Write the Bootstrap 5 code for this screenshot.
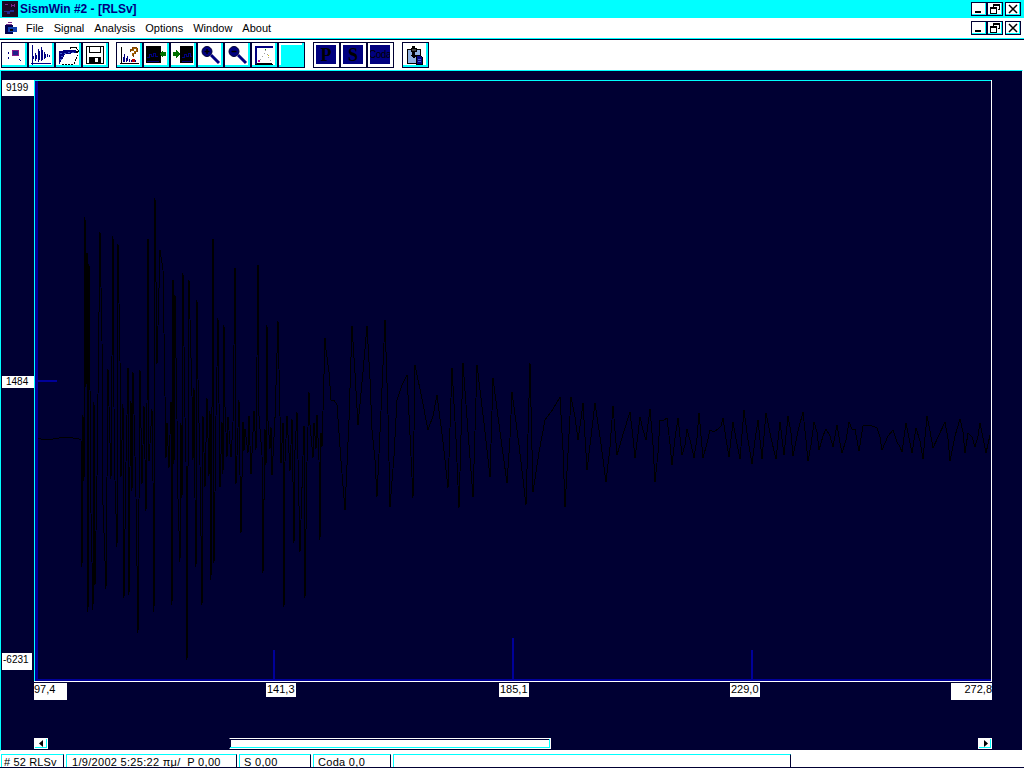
<!DOCTYPE html>
<html lang="en">
<head>
    <meta charset="UTF-8">
    <title>SismWin #2 - [RLSv]</title>
    <link href="https://cdn.jsdelivr.net/npm/bootstrap@5.3.0/dist/css/bootstrap.min.css" rel="stylesheet">
    <style>
        html, body { height: 768px; overflow: hidden; }
        body {
            background: #fff;
            color: #000;
            font-family: "Liberation Sans", Arial, sans-serif;
            font-size: 12px;
            line-height: 1;
        }
        .app-win { width: 1024px; height: 768px; }

        /* title + menu */
        .title-row { height: 18px; background: #0ff; padding: 0 2px; }
        .title-text { margin-left: 2px; color: #000080; font-weight: 700; font-size: 12px; }
        .menu-row { height: 20px; padding: 0 2px 0 5px; }
        .menu-item { margin-right: 10px; font-size: 11px; }
        .menu-icon { margin-right: 9px; }
        .win-btns { margin-left: auto; margin-right: 1px; }
        .win-btn {
            width: 16px; height: 14px; padding: 0;
            background: #fff;
            border: 1px solid #000033;
            box-shadow: inset -1px -1px 0 #0ff;
            border-radius: 0;
            display: flex; align-items: center; justify-content: center;
        }
        .win-gap { margin-left: 2px; }

        /* toolbar */
        .tool-row { height: 32px; padding: 3px 0 0 1px; border-top: 1px solid #0ff; background: #fff; position: relative; }
        .tool-row::before { content: ""; position: absolute; left: 0; right: 0; top: 0; height: 1px; background: #000033; }
        .tool-btn {
            width: 27px; height: 26px; padding: 0; border-radius: 0;
            background: #fff;
            border: 1px solid #000033;
            box-shadow: inset -2px -2px 0 #0ff;
            display: flex; align-items: flex-start; justify-content: flex-start;
            flex: none;
        }
        .tool-btn svg { display: block; margin: 1px 0 0 1px; }
        .tool-sep { width: 8px; flex: none; }
        .tool-sep-first { width: 7px; flex: none; }
        .tool-fill { background: #0ff; box-shadow: inset -2px -2px 0 #0ff, inset 2px 2px 0 #fff; }
        .tool-pick {
            width: 27px; height: 26px; padding: 2px 3px 3px 2px; border-radius: 0; flex: none;
            background: #fff; border: 1px solid #000033;
        }
        .pick-face {
            display: flex; align-items: center; justify-content: center;
            height: 100%; background: #000080; color: #000;
            font-family: "Liberation Serif", serif; font-weight: 700; font-size: 18px;
            overflow: hidden; white-space: nowrap;
        }
        .pick-small { font-family: "Liberation Sans", sans-serif; font-weight: 400; font-size: 10px; letter-spacing: -.5px; }

        /* chart area */
        .chart-area {
            position: relative;
            height: 681px;
            background: #000033;
            border-top: 1px solid #0ff;
            border-left: 1px solid #0ff;
            border-right: 1px solid #fff;
            border-bottom: 1px solid #fff;
            margin-right: 1px;
        }
        .plot-wrap { width: 958px; height: 602px; margin: 9px 0 0 33px; }
        .plot-wrap svg { display: block; }
        .val-tag {
            position: absolute; background: #fff; color: #000;
            font-size: 11px; line-height: 13px; white-space: nowrap;
        }
        .y-tag { left: 1px; width: 32px; font-size: 10px; padding-left: 4px; }
        .scroll-row { height: 11px; margin: 56px 0 0 33px; width: 958px; }
        .scroll-end {
            width: 14px; height: 11px; padding: 0; border-radius: 0; flex: none;
            background: #fff; border: 1px solid #fff; box-shadow: inset -1px -1px 0 #0ff;
            display: flex; align-items: center; justify-content: center;
        }
        .scroll-thumb {
            width: 322px; height: 11px; margin-left: 181px; flex: none;
            background: #fff; border: 1px solid #fff; border-left-color: #000033;
            box-shadow: inset -1px -1px 0 #0ff, inset 1px 1px 0 #000033;
        }

        /* status bar */
        .stat-row { height: 17px; padding: 3px 0 0 1px; border-bottom: 1px solid #000033; gap: 2px; }
        .stat-cell {
            height: 13px; padding: 2px 0 0 3px; flex: none;
            border-top: 1px solid #0ff; border-left: 1px solid #0ff; border-right: 1px solid #000033;
            font-size: 11px; letter-spacing: .3px; white-space: nowrap; overflow: hidden;
        }
        .stat-id { width: 63px; padding-left: 2px; letter-spacing: .15px; }
        .stat-time { width: 171px; padding-left: 5px; }
        .stat-s { width: 72px; padding-left: 4px; }
        .stat-coda { width: 78px; padding-left: 4px; }
        .stat-rest { width: 398px; }
    </style>
</head>
<body>
    <div class="app-win d-flex flex-column">

        <!-- title -->
        <div class="title-row d-flex align-items-center">
            <svg width="16" height="16" viewBox="0 0 16 16" shape-rendering="crispEdges">
                <rect width="16" height="16" fill="#1a0a24"/>
                <path d="M3 3h3v1H3zM9 3h1v3H9zM12 3h1v3h-1zM10 4h2v1h-2z" fill="#7a2a8a"/>
                <path d="M2 10h6v-1h4v2H8v2H5v-2H2z" fill="#202a90"/>
            </svg>
            <span class="title-text">SismWin #2 - [RLSv]</span>
            <div class="win-btns d-flex">
                <button class="win-btn" type="button"><svg width="12" height="10" shape-rendering="crispEdges"><rect x="2" y="7" width="6" height="2" fill="#000"/></svg></button>
                <button class="win-btn" type="button"><svg width="12" height="10" fill="none" stroke="#000" shape-rendering="crispEdges"><path d="M4.500 2.500v-2h6v5h-2M1.500 3.500h6v6h-6zM1.500 4.500h6M4.500 1.500h6"/></svg></button>
                <button class="win-btn win-gap" type="button"><svg width="12" height="10" fill="none" stroke="#000" stroke-width="1.500"><path d="M2 1l8 8M10 1l-8 8"/></svg></button>
            </div>
        </div>

        <!-- menu -->
        <div class="menu-row d-flex align-items-center">
            <svg class="menu-icon" width="12" height="13" viewBox="0 0 12 13" shape-rendering="crispEdges">
                <path d="M1 2h6v1H1zM3 0h4v1H3z" fill="#7a2a8a"/>
                <rect x="0" y="3" width="8" height="9" fill="#000050"/>
                <rect x="3" y="5" width="9" height="5" fill="#1040b0"/>
                <rect x="5" y="7" width="3" height="2" fill="#000"/>
            </svg>
            <span class="menu-item">File</span>
            <span class="menu-item">Signal</span>
            <span class="menu-item">Analysis</span>
            <span class="menu-item">Options</span>
            <span class="menu-item">Window</span>
            <span class="menu-item">About</span>
            <div class="win-btns d-flex">
                <button class="win-btn" type="button"><svg width="12" height="10" shape-rendering="crispEdges"><rect x="2" y="7" width="6" height="2" fill="#000"/></svg></button>
                <button class="win-btn" type="button"><svg width="12" height="10" fill="none" stroke="#000" shape-rendering="crispEdges"><path d="M4.500 2.500v-2h6v5h-2M1.500 3.500h6v6h-6zM1.500 4.500h6M4.500 1.500h6"/></svg></button>
                <button class="win-btn win-gap" type="button"><svg width="12" height="10" fill="none" stroke="#000" stroke-width="1.500"><path d="M2 1l8 8M10 1l-8 8"/></svg></button>
            </div>
        </div>

        <!-- toolbar -->
        <div class="tool-row d-flex">
            <button class="tool-btn" type="button"><svg width="22" height="22" shape-rendering="crispEdges">
                <rect x="9" y="6" width="7" height="6" fill="#8a1a8a"/><rect x="10" y="7" width="5" height="4" fill="#20208a"/>
                <path d="M5 8h1v2H5zM5 13h1v2H5zM16 15h1v1h-1zM17 16h1v1h-1z" fill="#000080"/>
            </svg></button>
            <button class="tool-btn" type="button"><svg width="22" height="22" fill="none" stroke="#000080" shape-rendering="crispEdges">
                <path d="M2.500 1v20M1 19.500h20"/>
                <path d="M3 12v3M5 9v8M6 11v4M8 5v13M9 7v9M11 3v14M12 6v10M14 8v7M15 10v4M17 10v3M19 11v2"/>
            </svg></button>
            <button class="tool-btn" type="button"><svg width="22" height="22" shape-rendering="crispEdges">
                <path d="M2 7h3l2-1h12v3L8 10 2 21z" fill="#000080"/>
                <path d="M3 9h2M7 9h2M11 8h2M15 8h2M4 12h2M3 15h2" stroke="#4060d0"/>
                <path d="M13 5V3h6v1l2 2v1M19 7h3l-2 2z" stroke="#000" fill="none"/>
                <path d="M5 20h12l4-9" stroke="#000" fill="none" stroke-dasharray="2 1"/>
            </svg></button>
            <button class="tool-btn" type="button"><svg width="22" height="22" shape-rendering="crispEdges">
                <path d="M2.500 2.500h17v17h-17z" fill="#fff" stroke="#000"/>
                <path d="M5.500 2.500v6h11v-6" fill="none" stroke="#000"/>
                <rect x="5" y="13" width="12" height="6" fill="#000"/>
                <rect x="11" y="14" width="3" height="4" fill="#fff"/>
            </svg></button>

            <div class="tool-sep-first"></div>

            <button class="tool-btn" type="button"><svg width="22" height="22" fill="none" shape-rendering="crispEdges">
                <path d="M3.500 3v17M2 19.500h19" stroke="#000"/>
                <path d="M5 13v5M6 10v8M8 14v4M9 12v5M11 15v3M13 16v2M15 15v2M17 16v2" stroke="#000080"/>
                <path d="M12 7.500V5.500h2V3.500h4v1h1.500v3h-2v2h-2v3" stroke="#804000"/>
                <path d="M13 7V6h2V4h3v3h-2v2h-2v3" stroke="#a06000"/>
                <rect x="14" y="15" width="3" height="3" fill="#c00000"/>
            </svg></button>
            <button class="tool-btn" type="button"><svg width="22" height="22" shape-rendering="crispEdges">
                <rect x="1" y="2" width="15" height="17" fill="#000"/>
                <path d="M2 13h2v-3h2v2h2v-3h2v3h3" stroke="#000080" fill="none"/>
                <path d="M2 17h12" stroke="#000080"/>
                <path d="M14 10l4-4v2h3v4h-3v2z" fill="#007000"/>
            </svg></button>
            <button class="tool-btn" type="button"><svg width="22" height="22" shape-rendering="crispEdges">
                <rect x="8" y="2" width="13" height="17" fill="#000"/>
                <path d="M10 13h2v-3h2v2h2v-3h2v3h2" stroke="#000080" fill="none"/>
                <path d="M10 17h10" stroke="#000080"/>
                <path d="M1 8h3V6l4 4-4 4v-2H1z" fill="#007000"/>
            </svg></button>
            <button class="tool-btn" type="button"><svg width="22" height="22">
                <circle cx="8" cy="7.500" r="5" fill="#000080" stroke="#000033"/>
                <path d="M5.500 7.500h5M8 5v5" stroke="#000" stroke-width="1.500"/>
                <path d="M12 11l8 8" stroke="#000080" stroke-width="3"/>
            </svg></button>
            <button class="tool-btn" type="button"><svg width="22" height="22">
                <circle cx="8" cy="7.500" r="5" fill="#000080" stroke="#000033"/>
                <path d="M5.500 7.500h5" stroke="#000" stroke-width="1.500"/>
                <path d="M12 11l8 8" stroke="#000080" stroke-width="3"/>
            </svg></button>
            <button class="tool-btn" type="button"><svg width="22" height="22" fill="none" shape-rendering="crispEdges">
                <path d="M2.500 19.500v-17h17" stroke="#000080" stroke-width="2"/>
                <path d="M2 20.500h18" stroke="#000"/>
                <path d="M4 19h15" stroke="#000"/>
                <path d="M12 6h1M11 9h1M14 10h1M9 12h1M15 13h1M7 15h1M17 16h1" stroke="#a0a0a0"/>
                <rect x="12" y="5" width="1" height="1" fill="#00a000"/>
                <rect x="15" y="11" width="1" height="1" fill="#d0c000"/>
                <rect x="5" y="16" width="2" height="2" fill="#d000a0"/>
            </svg></button>
            <button class="tool-btn tool-fill" type="button"></button>

            <div class="tool-sep"></div>

            <div class="tool-pick"><div class="pick-face">P</div></div>
            <div class="tool-pick"><div class="pick-face">S</div></div>
            <div class="tool-pick"><div class="pick-face pick-small">Coda</div></div>

            <div class="tool-sep"></div>

            <button class="tool-btn" type="button"><svg width="22" height="22" shape-rendering="crispEdges">
                <path d="M3.500 5.500h13v14h-13z" fill="#8fb0e0" stroke="#000"/>
                <path d="M7.500 4.500h5v3h-5z" fill="#404040" stroke="#000"/>
                <path d="M8 2h3v2H8z" fill="#000"/>
                <path d="M8 8h3v3h2l-3 4-3-4h1z" fill="#000"/>
                <path d="M12.500 11.500h4l2 2v7h-6z" fill="#000080" stroke="#000"/>
                <path d="M14 15h3M14 17h3" stroke="#4060d0"/>
            </svg></button>
        </div>

        <!-- chart -->
        <div class="chart-area">
            <div class="plot-wrap">
                <svg id="plot" width="958" height="602" viewBox="34 80 958 602" shape-rendering="crispEdges">
                    <path d="M34.500 682V80.500H991" fill="none" stroke="#0ff"/>
                    <path d="M36.500 81V680H991" fill="none" stroke="#000099" stroke-width="3"/>
                    <path d="M991.500 80v602M34 681.500h958" stroke="#fff"/>
                    <path d="M37 381h20M274 650v30M513 638v42M752 650v30" stroke="#000099" stroke-width="2"/>
                    <polyline id="wave" fill="none" stroke="#000"/>
                </svg>
            </div>

            <div class="val-tag y-tag" style="top:9px;height:16px;line-height:15px">9199</div>
            <div class="val-tag y-tag" style="top:305px;height:12px;line-height:12px">1484</div>
            <div class="val-tag y-tag" style="top:582px;height:17px;line-height:14px;padding-left:1px;width:30px">-6231</div>
            <div class="val-tag" style="left:33px;top:612px;width:33px;height:17px">97,4</div>
            <div class="val-tag" style="left:265px;top:612px;padding:0 1px;height:14px">141,3</div>
            <div class="val-tag" style="left:498px;top:612px;padding:0 1px;height:14px">185,1</div>
            <div class="val-tag" style="left:729px;top:612px;padding:0 1px;height:14px">229,0</div>
            <div class="val-tag text-end" style="left:950px;top:612px;width:41px;height:17px">272,8</div>

            <div class="scroll-row d-flex">
                <button class="scroll-end" type="button"><svg width="5" height="7"><path d="M4 0v7L0 3.500z" fill="#000"/></svg></button>
                <div class="scroll-thumb"></div>
                <button class="scroll-end ms-auto" type="button"><svg width="5" height="7"><path d="M1 0v7L5 3.500z" fill="#000"/></svg></button>
            </div>
        </div>

        <!-- status -->
        <div class="stat-row d-flex">
            <div class="stat-cell stat-id"># 52 RLSv</div>
            <div class="stat-cell stat-time">1/9/2002 5:25:22 πμ/&nbsp; P 0,00</div>
            <div class="stat-cell stat-s">S 0,00</div>
            <div class="stat-cell stat-coda">Coda 0,0</div>
            <div class="stat-cell stat-rest"></div>
        </div>
    </div>

    <script src="https://cdn.jsdelivr.net/npm/bootstrap@5.3.0/dist/js/bootstrap.bundle.min.js"></script>
    <script>
        // extremes read off the trace, [x, y]
        const bigPeaks = [[85,217],[87,253],[89,264],[100,232],[113,236],[118,244],[148,239],[155,198],[160,250],[163,270],[173,280],[175,295],[183,273],[189,280],[197,300],[213,239],[218,318],[224,325],[235,268],[258,265],[267,325],[278,321],[309,392],[325,338],
            [82,567],[88,612],[93,610],[95,585],[106,589],[117,547],[124,598],[129,595],[138,633],[154,612],[172,605],[180,562],[187,660],[196,567],[202,605],[211,580],[214,563],[241,533],[263,573],[284,607],[294,543],[300,552],[305,598],[320,540]];
        const tail = [[326,350],[331,400],[337,405],[345,510],[352,326],[358,425],[367,326],[372,430],[377,497],[385,320],[390,507],[397,400],[407,375],[413,498],[415,365],[428,430],[437,395],[448,488],[452,368],[459,508],[463,363],[473,497],[477,365],[490,477],[493,378],[507,483],[512,392],[526,505],[530,363],[533,492],[545,420],[560,397],[565,507],[571,397],[578,440],[583,403],[587,470],[595,403],[606,482],[613,406],[617,455],[630,412],[635,458],[640,417],[646,440],[650,409],[655,482],[660,420],[667,418],[672,465],[678,418],[682,455],[687,429],[694,458],[699,413],[703,458],[710,430],[718,429],[723,418],[729,457],[733,422],[740,459],[744,410],[752,464],[758,420],[762,459],[766,413],[776,459],[780,422],[784,455],[788,416],[793,456],[803,412],[808,461],[814,422],[819,450],[826,429],[833,447],[837,425],[842,453],[849,422],[855,429],[859,451],[863,426],[877,428],[882,450],[893,430],[897,442],[902,452],[906,423],[912,453],[916,428],[923,459],[927,416],[933,448],[945,422],[950,461],[960,419],[965,453],[968,433],[975,447],[980,423],[986,453],[990,435]];

        let seed = 7;
        function rnd() {
            seed = (seed * 16807) % 2147483647;
            return seed / 2147483647;
        }

        const pts = [];
        // quiet part before the first arrival
        for (let x = 38; x < 82; x++) {
            pts.push([x, Math.round(438 + Math.sin(x / 6) * 1)]);
        }
        // strong part: spikes a few pixels apart, under an envelope that decays
        const strong = new Map(bigPeaks);
        let up = true;
        for (let x = 83; x <= 325; x += 1 + Math.floor(rnd() * 3)) {
            if (strong.has(x)) continue;
            const k = 1 - (x - 82) / 460;
            const amp = (up ? 125 : 120) * k * k * (0.2 + 0.8 * rnd() * Math.sqrt(rnd()));
            strong.set(x, Math.round(440 + (up ? -amp : amp)));
            up = !up;
        }
        [...strong.entries()].sort((a, b) => a[0] - b[0]).forEach(p => pts.push(p));
        // coda: hand points, with one small wiggle between each pair
        for (let i = 0; i < tail.length - 1; i++) {
            const a = tail[i], b = tail[i + 1];
            pts.push(a);
            if (b[0] - a[0] > 4) {
                const mx = Math.round((a[0] + b[0]) / 2);
                pts.push([mx, Math.round((a[1] + b[1]) / 2 + (rnd() - 0.5) * 8)]);
            }
        }
        pts.push(tail[tail.length - 1]);
        document.getElementById('wave').setAttribute('points', pts.map(p => p.join(',')).join(' '));
    </script>
</body>
</html>
